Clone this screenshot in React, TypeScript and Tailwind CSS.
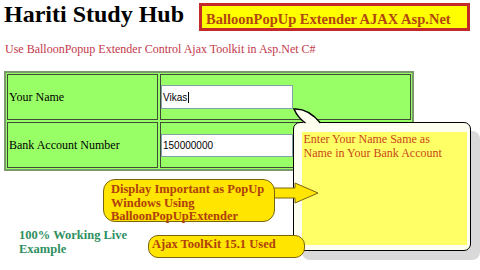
import React from "react";

export default function App() {
  return (
    <div className="relative h-[270px] w-[480px] overflow-hidden bg-white font-['Liberation_Serif',serif] text-black">
      {/* header */}
      <div className="flex h-[31px] items-start">
        <div className="w-[199px] pl-[4px] text-[24px] font-bold leading-[28px]">Hariti Study Hub</div>
        <div className="mt-[3px] h-[28px] w-[271px] border-[3px] border-[#c42a2a] bg-[#ffff00] pl-[4px] pt-[2px] text-[14.5px] font-bold leading-[22px] text-[#b3460e] whitespace-nowrap">
          BalloonPopUp Extender AJAX Asp.Net
        </div>
      </div>

      <p className="mt-[10px] pl-[5px] text-[12px] leading-[16px] text-[#c3384a]">
        Use BalloonPopup Extender Control Ajax Toolkit in Asp.Net C#
      </p>

      {/* table */}
      <div className="ml-[4px] mt-[14px] grid w-[410px] grid-cols-[151px_251px] grid-rows-[46px_46px] gap-[2px] border-2 border-[#7a9a6c] bg-[#99ff66] p-[1px]">
        <div className="flex items-center border border-[#3f4a3a] pl-[1px] text-[12px]">Your Name</div>
        <div className="flex items-center border border-[#3f4a3a]">
          <div className="flex h-[24px] w-[132px] items-center border border-[#7fa3a3] bg-white pl-[1px] font-['Liberation_Sans',sans-serif] text-[10px]">
            Vikas
            <span className="ml-[1px] inline-block h-[11px] w-px bg-black" />
          </div>
        </div>
        <div className="flex items-center border border-[#3f4a3a] pl-[1px] text-[12px]">Bank Account Number</div>
        <div className="flex items-center border border-[#3f4a3a]">
          <div className="flex h-[23px] w-[132px] items-center border border-[#7fa3a3] bg-white pl-[1px] font-['Liberation_Sans',sans-serif] text-[10px]">
            150000000
          </div>
        </div>
      </div>

      <div className="ml-[19px] mt-[57px] text-[12.5px] font-bold leading-[14px] text-[#2f8f5f]">
        100% Working Live
        <br />
        Example
      </div>

      {/* balloon popup */}
      <div className="absolute left-[302px] top-[131px] h-[129px] w-[178px] rounded-[8px] bg-[#d9d9d9]" />
      <div className="absolute left-[293px] top-[122px] h-[129px] w-[178px] rounded-[7px] border-[1.5px] border-black bg-[#fffff0] pb-[5.5px] pl-[7.5px] pr-[3.5px] pt-[8.5px]">
        <div className="h-full bg-[#ffff66] pl-[2px] text-[12px] leading-[14px] text-[#c9471a]">
          Enter Your Name Same as
          <br />
          Name in Your Bank Account
        </div>
      </div>
      <svg className="absolute left-[288px] top-[104px]" width="36" height="22" viewBox="0 0 36 22">
        <path d="M17 20 Q 10 14 6 5 Q 20 4 33 20 Z" fill="#fffff0" />
        <path d="M17.5 19 Q 10 14 6 5 Q 20 4 32.5 19" fill="none" stroke="#000" strokeWidth="1.5" />
      </svg>

      {/* arrow */}
      <svg className="absolute left-[270px] top-[182px]" width="50" height="23" viewBox="0 0 50 23">
        <path d="M0 6 H25 V1 L48 11 L25 21 V16 H0 Z" fill="#ffe500" stroke="#7a6410" strokeWidth="1" />
      </svg>

      {/* callouts */}
      <div className="absolute left-[103px] top-[179px] h-[43px] w-[172px] rounded-[12px] border border-[#7a6410] bg-[#ffe500] pl-[7px] pt-[3px] text-[12.5px] font-bold leading-[13.5px] text-[#b0400c] whitespace-nowrap">
        Display Important as PopUp
        <br />
        Windows Using
        <br />
        BalloonPopUpExtender
      </div>
      <div className="absolute left-[148px] top-[235px] h-[23px] w-[157px] rounded-[10px] border border-[#7a6410] bg-[#ffe500] pl-[3px] text-[12.5px] font-bold leading-[16px] text-[#b0400c] whitespace-nowrap">
        Ajax ToolKit 15.1 Used
      </div>
    </div>
  );
}
